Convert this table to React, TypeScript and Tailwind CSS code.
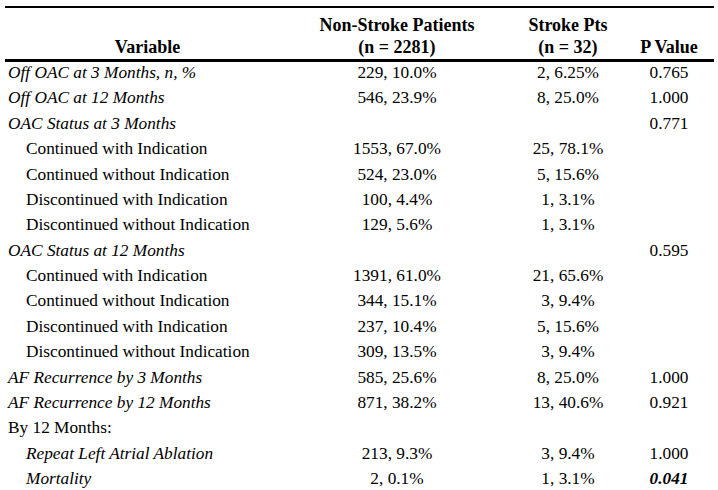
type Row = {
  label: string;
  italic?: boolean;
  indent?: boolean;
  non?: string;
  stroke?: string;
  p?: string;
  pStrong?: boolean;
};

const rows: Row[] = [
  { label: 'Off OAC at 3 Months, n, %', italic: true, non: '229, 10.0%', stroke: '2, 6.25%', p: '0.765' },
  { label: 'Off OAC at 12 Months', italic: true, non: '546, 23.9%', stroke: '8, 25.0%', p: '1.000' },
  { label: 'OAC Status at 3 Months', italic: true, p: '0.771' },
  { label: 'Continued with Indication', indent: true, non: '1553, 67.0%', stroke: '25, 78.1%' },
  { label: 'Continued without Indication', indent: true, non: '524, 23.0%', stroke: '5, 15.6%' },
  { label: 'Discontinued with Indication', indent: true, non: '100, 4.4%', stroke: '1, 3.1%' },
  { label: 'Discontinued without Indication', indent: true, non: '129, 5.6%', stroke: '1, 3.1%' },
  { label: 'OAC Status at 12 Months', italic: true, p: '0.595' },
  { label: 'Continued with Indication', indent: true, non: '1391, 61.0%', stroke: '21, 65.6%' },
  { label: 'Continued without Indication', indent: true, non: '344, 15.1%', stroke: '3, 9.4%' },
  { label: 'Discontinued with Indication', indent: true, non: '237, 10.4%', stroke: '5, 15.6%' },
  { label: 'Discontinued without Indication', indent: true, non: '309, 13.5%', stroke: '3, 9.4%' },
  { label: 'AF Recurrence by 3 Months', italic: true, non: '585, 25.6%', stroke: '8, 25.0%', p: '1.000' },
  { label: 'AF Recurrence by 12 Months', italic: true, non: '871, 38.2%', stroke: '13, 40.6%', p: '0.921' },
  { label: 'By 12 Months:' },
  { label: 'Repeat Left Atrial Ablation', italic: true, indent: true, non: '213, 9.3%', stroke: '3, 9.4%', p: '1.000' },
  { label: 'Mortality', italic: true, indent: true, non: '2, 0.1%', stroke: '1, 3.1%', p: '0.041', pStrong: true },
];

const cols = 'grid grid-cols-[285px_214px_128px_82px]';

export default function App() {
  return (
    <div className="h-[490px] w-[718px] overflow-hidden bg-white pt-[6px] font-['Liberation_Serif','Times_New_Roman',serif] text-[17.3px] text-black">
      <div className="ml-[5px] w-[709px]">
        <div className={`${cols} h-[56px] items-end border-t-2 border-b-[3px] border-black pb-[1px] text-[18px] font-bold leading-[22px]`}>
          <div className="text-center">Variable</div>
          <div className="text-center">
            Non-Stroke Patients
            <br />
            (n = 2281)
          </div>
          <div className="text-center">
            Stroke Pts
            <br />
            (n = 32)
          </div>
          <div className="pr-[8px] text-center">P Value</div>
        </div>

        {rows.map((r, i) => (
          <div key={i} className={`${cols} h-[25.375px] pt-[2px] leading-[18px]`}>
            <div className={`${r.indent ? 'pl-[21px]' : 'pl-[3px]'} ${r.italic ? 'italic' : ''} whitespace-nowrap`}>
              {r.label}
            </div>
            <div className="text-center">{r.non ?? ''}</div>
            <div className="text-center">{r.stroke ?? ''}</div>
            <div className={`pr-[8px] text-center ${r.pStrong ? 'font-bold italic' : ''}`}>{r.p ?? ''}</div>
          </div>
        ))}
      </div>
    </div>
  );
}
